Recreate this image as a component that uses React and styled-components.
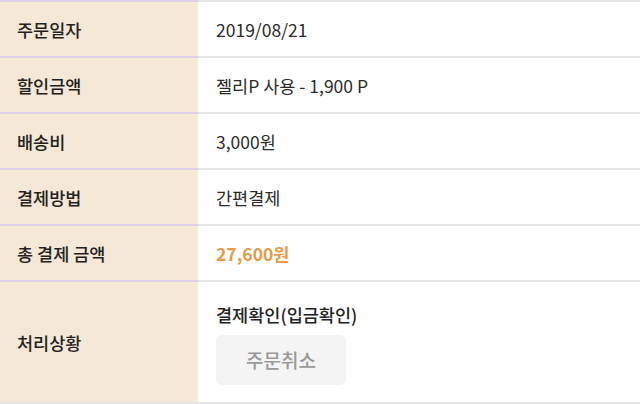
import React from 'react'
import styled, { createGlobalStyle } from 'styled-components'

const GlobalStyle = createGlobalStyle`
  * { box-sizing: border-box; }
  body {
    margin: 0;
    background: #fff;
    font-family: "Noto Sans CJK KR", "Noto Sans", sans-serif;
  }
`

const rows = [
  { label: '주문일자', value: '2019/08/21' },
  { label: '할인금액', value: '젤리P 사용 - 1,900 P' },
  { label: '배송비', value: '3,000원' },
  { label: '결제방법', value: '간편결제' },
  { label: '총 결제 금액', value: '27,600원', highlight: true },
]

const App = () => {
  return (
    <>
      <GlobalStyle />
      <Table>
        {rows.map((row) => (
          <Row key={row.label}>
            <Label>{row.label}</Label>
            <Value $highlight={row.highlight}>{row.value}</Value>
          </Row>
        ))}
        <Row $tall>
          <Label>처리상황</Label>
          <Value>
            <Status>
              <StatusText>결제확인(입금확인)</StatusText>
              <CancelButton>주문취소</CancelButton>
            </Status>
          </Value>
        </Row>
      </Table>
    </>
  )
}

export default App

const Table = styled.div`
  width: 640px;
  display: flex;
  flex-direction: column;
  border-bottom: 2px solid #e6e6e6;
`

const Row = styled.div`
  display: grid;
  grid-template-columns: 198px 1fr;
  height: ${(p) => (p.$tall ? '122px' : '56px')};
`

const Label = styled.div`
  background: #f6e8d7;
  border-top: 2px solid #dcd0e8;
  display: flex;
  align-items: center;
  padding-left: 17px;
  font-size: 17.5px;
  font-weight: 500;
  color: #222;
`

const Value = styled.div`
  border-top: 2px solid #e6e6e6;
  display: flex;
  align-items: center;
  padding-left: 18px;
  font-size: 17.5px;
  color: ${(p) => (p.$highlight ? '#e89a48' : '#2a2a2a')};
  font-weight: ${(p) => (p.$highlight ? 700 : 400)};
`

const Status = styled.div`
  display: flex;
  flex-direction: column;
  align-items: flex-start;
  gap: 8px;
  padding-top: 2px;
`

const StatusText = styled.div`
  font-size: 17.5px;
  font-weight: 500;
  color: #222;
`

const CancelButton = styled.button`
  width: 130px;
  height: 50px;
  border: none;
  border-radius: 6px;
  background: #f4f4f4;
  color: #999;
  font-family: inherit;
  font-size: 19px;
  font-weight: 500;
  cursor: pointer;
`
